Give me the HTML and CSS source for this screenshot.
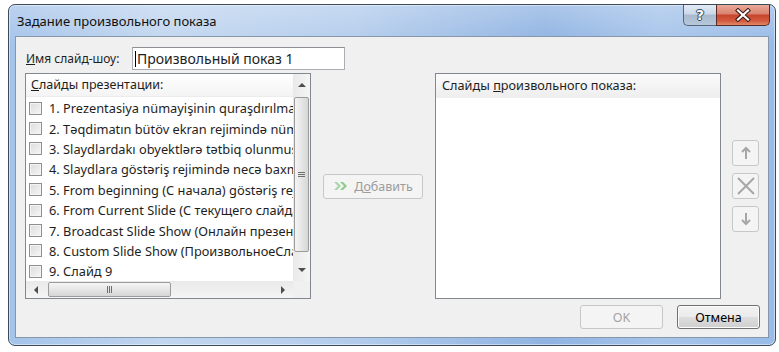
FILE: index.html
```html
<!DOCTYPE html>
<html lang="ru">
<head>
<meta charset="utf-8">
<title>Задание произвольного показа</title>
<link rel="stylesheet" href="styles.css">
</head>
<body>
<div class="window">
  <div class="titlebar">
    <span class="title">Задание произвольного показа</span>
    <div class="caption-btns">
      <div class="cbtn help">?</div>
      <div class="cbtn close">
        <svg width="18" height="14" viewBox="0 0 18 14">
          <path d="M4 2.5 L14 11.5 M14 2.5 L4 11.5" stroke="#3a1a14" stroke-width="4.2" stroke-linecap="square"/>
          <path d="M4 2.5 L14 11.5 M14 2.5 L4 11.5" stroke="#ffffff" stroke-width="2.2" stroke-linecap="square"/>
        </svg>
      </div>
    </div>
  </div>
  <div class="client">
    <div class="name-row">
      <label class="lbl"><u>И</u>мя слайд-шоу:</label>
      <div class="input"><span class="caret"></span>Произвольный показ 1</div>
    </div>
    <div class="main">
      <div class="listbox">
        <div class="lb-content">
          <div class="lb-header"><u>С</u>лайды презентации:</div>
          <div class="items">
            <div class="item"><span class="cb"></span><span class="txt">1. Prezentasiya nümayişinin quraşdırılması</span></div>
            <div class="item"><span class="cb"></span><span class="txt">2. Təqdimatın bütöv ekran rejimində nümayişi</span></div>
            <div class="item"><span class="cb"></span><span class="txt">3. Slaydlardakı obyektlərə tətbiq olunmuş effektlər</span></div>
            <div class="item"><span class="cb"></span><span class="txt">4. Slaydlara göstəriş rejimində necə baxmaq olar</span></div>
            <div class="item"><span class="cb"></span><span class="txt">5. From beginning (С начала) göstəriş rejimi</span></div>
            <div class="item"><span class="cb"></span><span class="txt">6. From Current Slide (С текущего слайда) göstəriş rejimi</span></div>
            <div class="item"><span class="cb"></span><span class="txt">7. Broadcast Slide Show (Онлайн презентация)</span></div>
            <div class="item"><span class="cb"></span><span class="txt">8. Custom Slide Show (ПроизвольноеСлайд-шоу)</span></div>
            <div class="item"><span class="cb"></span><span class="txt">9. Слайд 9</span></div>
          </div>
        </div>
        <div class="vscroll">
          <div class="sbtn"><span class="tri up"></span></div>
          <div class="vtrack"><div class="vthumb"><span class="vgrip"></span></div></div>
          <div class="sbtn"><span class="tri down"></span></div>
        </div>
        <div class="hscroll">
          <div class="hbtn"><span class="tri left"></span></div>
          <div class="htrack"><div class="hthumb"><span class="hgrip"></span></div></div>
          <div class="hbtn"><span class="tri right"></span></div>
        </div>
        <div class="corner"></div>
      </div>
      <div class="mid">
        <div class="btn add">
          <svg class="addicon" width="16" height="10" viewBox="0 0 16 10">
            <path d="M1 1 H4 L8 5 L4 9 H1 L5 5 Z" fill="#a9d6a9"/>
            <path d="M7 1 H10 L14 5 L10 9 H7 L11 5 Z" fill="#8ccb8c"/>
          </svg>
          <span>Д<u>о</u>бавить</span>
        </div>
      </div>
      <div class="listbox2">
        <div class="lb-header2">Слайды <u>п</u>роизвольного показа:</div>
      </div>
      <div class="order">
        <div class="obtn">
          <svg width="12" height="14" viewBox="0 0 12 14"><path d="M6 2 L6 13 M2 6 L6 2 L10 6" fill="none" stroke="#a6a6a6" stroke-width="2"/></svg>
        </div>
        <div class="obtn">
          <svg width="20" height="18" viewBox="0 0 20 18"><path d="M2 1 L18 17 M18 1 L2 17" stroke="#a6a6a6" stroke-width="2"/></svg>
        </div>
        <div class="obtn">
          <svg width="12" height="14" viewBox="0 0 12 14"><path d="M6 1 L6 12 M2 8 L6 12 L10 8" fill="none" stroke="#a6a6a6" stroke-width="2"/></svg>
        </div>
      </div>
    </div>
    <div class="footer">
      <div class="btn ok">OK</div>
      <div class="btn cancel">Отмена</div>
    </div>
  </div>
</div>
</body>
</html>
```
FILE: styles.css
```css
html, body {
  margin: 0;
  padding: 0;
  background: #ffffff;
}
body {
  font-family: "Noto Sans", "Open Sans", sans-serif;
  font-size: 12px;
  color: #1e1e1e;
}
.window {
  box-sizing: border-box;
  margin: 4px 0 0 8px;
  width: 768px;
  height: 342px;
  border: 1px solid #3c4a5a;
  border-radius: 7px;
  padding: 0 6px 7px 6px;
  background:
    linear-gradient(to bottom, rgba(255,255,255,0.25), rgba(255,255,255,0) 40px),
    linear-gradient(to right, #a4c3ea 0%, #c1d6ef 20%, #b3ccec 45%, #8fb3e2 70%, #a6c4ea 85%, #98bbe8 100%);
  box-shadow: inset 0 0 0 1px rgba(255,255,255,0.45);
}
.titlebar {
  height: 31px;
  display: flex;
  justify-content: space-between;
  align-items: flex-start;
}
.title {
  margin-top: 7px;
  margin-left: 2px;
  font-size: 13px;
  color: #101010;
}
.caption-btns {
  display: flex;
  margin-right: -1px;
}
.cbtn {
  box-sizing: border-box;
  height: 21px;
  display: flex;
  align-items: center;
  justify-content: center;
  border: 1px solid #5a6676;
  border-top: none;
}
.help {
  width: 33px;
  border-radius: 0 0 0 5px;
  border-right: none;
  background: linear-gradient(to bottom, #e3ebf5 0%, #cbd8e8 45%, #a9bace 50%, #b6c7dc 100%);
  color: #ffffff;
  font-family: "DejaVu Sans", sans-serif;
  font-weight: bold;
  font-size: 14px;
  text-shadow: 0 0 1px #3a4656, 1px 0 0 #3a4656, -1px 0 0 #3a4656, 0 1px 0 #3a4656, 0 -1px 0 #3a4656;
}
.close {
  width: 54px;
  border-radius: 0 0 5px 0;
  border-color: #5a2a22;
  background: linear-gradient(to bottom, #e9a99a 0%, #d9826f 45%, #c7442c 50%, #d35a40 80%, #e08a6a 100%);
}
.client {
  box-sizing: border-box;
  height: 302px;
  border: 1px solid #8696ab;
  background: #f0f0f0;
  padding: 10px 8px 0 9px;
}
.name-row {
  display: flex;
  align-items: center;
  height: 23px;
}
.lbl {
  width: 106px;
  margin-left: 1px;
}
.input {
  box-sizing: border-box;
  width: 213px;
  height: 23px;
  border: 1px solid #abadb3;
  border-top-color: #8e9096;
  background: #ffffff;
  display: flex;
  align-items: center;
  padding-left: 2px;
  font-size: 14px;
}
.caret {
  display: inline-block;
  width: 1px;
  height: 16px;
  background: #000;
  margin-right: 1px;
}
.main {
  display: flex;
  margin-top: 3px;
  height: 226px;
}
.listbox {
  box-sizing: border-box;
  width: 286px;
  height: 226px;
  border: 1px solid #828790;
  background: #ffffff;
  display: grid;
  grid-template-columns: 1fr 17px;
  grid-template-rows: 1fr 17px;
}
.lb-content {
  overflow: hidden;
  min-width: 0;
}
.lb-header {
  height: 22px;
  line-height: 22px;
  padding-left: 5px;
  font-size: 12.5px;
  background: linear-gradient(to bottom, #ffffff, #f4f4f4);
  border-bottom: 1px solid #ececec;
  white-space: nowrap;
}
.items {
  padding-top: 1px;
}
.item {
  height: 20.4px;
  display: flex;
  align-items: center;
  white-space: nowrap;
  font-size: 12.8px;
}
.cb {
  box-sizing: border-box;
  flex: none;
  width: 13px;
  height: 13px;
  margin-left: 3px;
  border: 1px solid #8e8f8f;
  background: linear-gradient(135deg, #dcdcdc, #f6f6f6);
  box-shadow: inset 0 0 0 1px #f4f4f4;
}
.txt {
  margin-left: 7px;
}
.vscroll {
  display: flex;
  flex-direction: column;
  background: linear-gradient(to right, #e9e9e9, #f5f5f5);
}
.sbtn {
  height: 22px;
  display: flex;
  align-items: center;
  justify-content: center;
}
.vtrack {
  flex: 1;
  padding: 1px 1px 0 1px;
}
.vthumb {
  box-sizing: border-box;
  height: 155px;
  border: 1px solid #9b9b9b;
  border-radius: 2px;
  background: linear-gradient(to right, #f5f5f5, #e6e6e6 50%, #d6d6d6);
  display: flex;
  align-items: center;
  justify-content: center;
}
.vgrip {
  width: 7px;
  height: 5px;
  background: repeating-linear-gradient(to bottom, #6e6e6e 0 1px, transparent 1px 2px);
}
.hscroll {
  display: flex;
  background: linear-gradient(to bottom, #e9e9e9, #f5f5f5);
}
.hbtn {
  width: 20px;
  display: flex;
  align-items: center;
  justify-content: center;
}
.htrack {
  flex: 1;
  padding: 1px 0 1px 2px;
}
.hthumb {
  box-sizing: border-box;
  width: 123px;
  height: 100%;
  border: 1px solid #9b9b9b;
  border-radius: 2px;
  background: linear-gradient(to bottom, #f5f5f5, #e6e6e6 50%, #d6d6d6);
  display: flex;
  align-items: center;
  justify-content: center;
}
.hgrip {
  width: 5px;
  height: 7px;
  background: repeating-linear-gradient(to right, #6e6e6e 0 1px, transparent 1px 2px);
}
.corner {
  background: #f0f0f0;
}
.tri {
  width: 0;
  height: 0;
  border: 4px solid transparent;
}
.tri.up { border-bottom: 4px solid #4d4d4d; border-top: none; }
.tri.down { border-top: 4px solid #4d4d4d; border-bottom: none; }
.tri.left { border-right: 4px solid #4d4d4d; border-left: none; }
.tri.right { border-left: 4px solid #4d4d4d; border-right: none; }
.mid {
  width: 124px;
  display: flex;
  align-items: center;
  justify-content: center;
}
.btn {
  box-sizing: border-box;
  display: flex;
  align-items: center;
  justify-content: center;
  border-radius: 3px;
}
.add {
  width: 100px;
  height: 25px;
  border: 1px solid #c5c8cb;
  background: #f4f4f4;
  color: #9c9c9c;
  font-size: 12.5px;
  gap: 5px;
}
.listbox2 {
  box-sizing: border-box;
  width: 286px;
  height: 226px;
  border: 1px solid #828790;
  background: #ffffff;
}
.lb-header2 {
  height: 23px;
  line-height: 23px;
  padding-left: 6px;
  font-size: 12.7px;
  background: linear-gradient(to bottom, #fbfbfb, #eeeeee);
  border-bottom: 1px solid #f0f0f0;
  white-space: nowrap;
}
.order {
  margin-left: 11px;
  width: 27px;
  display: flex;
  flex-direction: column;
  justify-content: center;
  gap: 7px;
}
.obtn {
  box-sizing: border-box;
  width: 27px;
  height: 26px;
  border: 1px solid #c5c8cb;
  border-radius: 3px;
  background: #f4f4f4;
  display: flex;
  align-items: center;
  justify-content: center;
}
.footer {
  display: flex;
  justify-content: flex-end;
  gap: 14px;
  margin-top: 6px;
}
.ok, .cancel {
  width: 83px;
  height: 24px;
  font-size: 12.5px;
}
.ok {
  border: 1px solid #c5c8cb;
  background: #f4f4f4;
  color: #a3a3a3;
}
.cancel {
  border: 1px solid #707070;
  background: linear-gradient(to bottom, #f2f2f2 0%, #ebebeb 50%, #dddddd 51%, #cfcfcf 100%);
  color: #000000;
  box-shadow: inset 0 0 0 1px #fcfcfc;
}
```
